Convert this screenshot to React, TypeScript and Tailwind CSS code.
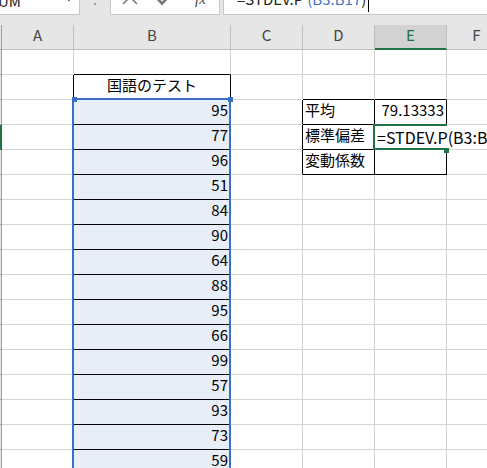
import React from 'react';

const COLS: { k: string; w: string }[] = [
  { k: 'A', w: 'w-[72px]' },
  { k: 'B', w: 'w-[157px]' },
  { k: 'C', w: 'w-[72px]' },
  { k: 'D', w: 'w-[72px]' },
  { k: 'E', w: 'w-[72px]' },
  { k: 'F', w: 'w-[60px]' },
];

const scores = [95, 77, 96, 51, 84, 90, 64, 88, 95, 66, 99, 57, 93, 73, 59];
const ROWS = Array.from({ length: 17 }, (_, i) => i + 1);

function content(r: number, c: string): { text: string; align: 'l' | 'c' | 'r' } | null {
  if (c === 'B' && r === 2) return { text: '国語のテスト', align: 'c' };
  if (c === 'B' && r >= 3 && r <= 17) return { text: String(scores[r - 3]), align: 'r' };
  if (c === 'D' && r === 3) return { text: '平均', align: 'l' };
  if (c === 'D' && r === 4) return { text: '標準偏差', align: 'l' };
  if (c === 'D' && r === 5) return { text: '変動係数', align: 'l' };
  if (c === 'E' && r === 3) return { text: '79.13333', align: 'r' };
  return null;
}

function rightBlack(r: number, c: string) {
  if ((c === 'A' || c === 'B') && r >= 2 && r <= 17) return true;
  if ((c === 'C' || c === 'D' || c === 'E') && r >= 3 && r <= 5) return true;
  return false;
}

function bottomBlack(r: number, c: string) {
  if (c === 'B' && r >= 1 && r <= 17) return true;
  if ((c === 'D' || c === 'E') && r >= 2 && r <= 5) return true;
  return false;
}

export default function App() {
  return (
    <div className="relative w-[487px] h-[468px] overflow-hidden bg-white font-['Noto_Sans_CJK_JP','Noto_Sans',sans-serif] text-black">
      {/* top bar */}
      <div className="flex h-[25px] bg-[#e6e6e6] items-start">
        <div className="relative w-[80px] h-[15px] shrink-0 bg-white border-r border-b border-[#c6c6c6] overflow-hidden">
          <div className="text-[15px] leading-[15px] -mt-[7px] -ml-[11px] text-[#222] whitespace-nowrap">SUM</div>
          <svg className="absolute left-0 top-0" width="80" height="14">
            <path d="M65 -3 L69 1.5 L73 -3 Z" fill="#666" />
          </svg>
        </div>
        <div className="w-[30px] h-[15px] shrink-0 flex justify-center pt-[3px]">
          <div className="w-[2px] h-[2px] bg-[#9a9a9a]" />
        </div>
        <div className="w-[110px] h-[15px] shrink-0 bg-white border-l border-r border-b border-[#c6c6c6] overflow-hidden">
          <svg width="108" height="14">
            <path d="M12 -10 L26 4 M26 -10 L12 4" stroke="#7a7a7a" strokeWidth="1.6" fill="none" />
            <path d="M44 -4 L51 3.5 L64 -10" stroke="#7a7a7a" strokeWidth="2.6" fill="none" />
            <text x="84" y="4" fontFamily="Liberation Serif, serif" fontStyle="italic" fontSize="15" fill="#444">fx</text>
          </svg>
        </div>
        <div className="w-[3px] shrink-0" />
        <div className="flex-1 h-[15px] bg-white border-l border-b border-[#c6c6c6] overflow-hidden flex items-start pl-[13px]">
          <div className="text-[15px] leading-[15px] -mt-[9px] whitespace-nowrap text-[#222]">
            =STDEV.P<span className="ml-[4px] text-[#3c6fc8]">(B3:B17</span>)
          </div>
          <div className="w-px h-[12px] bg-black ml-[2px]" />
        </div>
      </div>

      {/* column headers */}
      <div className="flex h-[25px] bg-[#e6e6e6]">
        <div className="w-[2px] h-full shrink-0 border-r border-b border-[#9e9e9e]" />
        {COLS.map((col) => (
          <div
            key={col.k}
            className={
              col.w +
              ' shrink-0 h-full border-r border-r-[#bfbfbf] flex items-center justify-center text-[15px] ' +
              (col.k === 'E'
                ? 'bg-[#d2d2d2] border-b-2 border-b-[#217346] text-[#217346] pb-[2px]'
                : 'border-b border-b-[#bfbfbf] text-[#444] pb-[3px]')
            }
          >
            {col.k}
          </div>
        ))}
      </div>

      {/* rows */}
      {ROWS.map((r) => (
        <div key={r} className="flex h-[25px]">
          <div
            className={
              'w-[2px] h-full shrink-0 ' +
              (r === 4 ? 'bg-[#217346]' : 'bg-[#e6e6e6] border-r border-b border-[#9e9e9e]')
            }
          />
          {COLS.map((col) => {
            const ct = content(r, col.k);
            const fill = col.k === 'B' && r >= 3 ? 'bg-[#e8eef8]' : 'bg-white';
            const rb = rightBlack(r, col.k) ? 'border-r-black' : 'border-r-[#d4d4d4]';
            const bb = bottomBlack(r, col.k) ? 'border-b-black' : 'border-b-[#d4d4d4]';
            const just =
              ct?.align === 'r' ? 'justify-end pr-[2px]' : ct?.align === 'c' ? 'justify-center' : 'justify-start pl-[2px]';
            return (
              <div
                key={col.k}
                className={
                  col.w +
                  ' shrink-0 h-full border-r border-b overflow-hidden whitespace-nowrap flex items-center pb-[3px] text-[15px] ' +
                  fill +
                  ' ' +
                  rb +
                  ' ' +
                  bb +
                  ' ' +
                  just
                }
              >
                {ct ? ct.text : null}
              </div>
            );
          })}
        </div>
      ))}

      {/* range selection B3:B17 */}
      <div className="absolute left-[72px] top-[98px] w-[159px] h-[380px] border-2 border-[#3c6fc8] pointer-events-none" />
      <div className="absolute left-[72px] top-[97px] w-[5px] h-[5px] bg-[#3c6fc8]" />
      <div className="absolute left-[228px] top-[97px] w-[5px] h-[5px] bg-[#3c6fc8]" />

      {/* active cell E4 */}
      <div className="absolute left-[373px] top-[124px] w-[74px] h-[26px] border-2 border-[#217346]" />
      <div className="absolute left-[444px] top-[148px] w-[5px] h-[5px] bg-[#217346]" />
      <div className="absolute left-[375px] top-[126px] right-0 h-[22px] bg-white pl-[2px] text-[16px] leading-[22px] whitespace-nowrap overflow-hidden">
        =STDEV.P(B3:B17)
      </div>
    </div>
  );
}
